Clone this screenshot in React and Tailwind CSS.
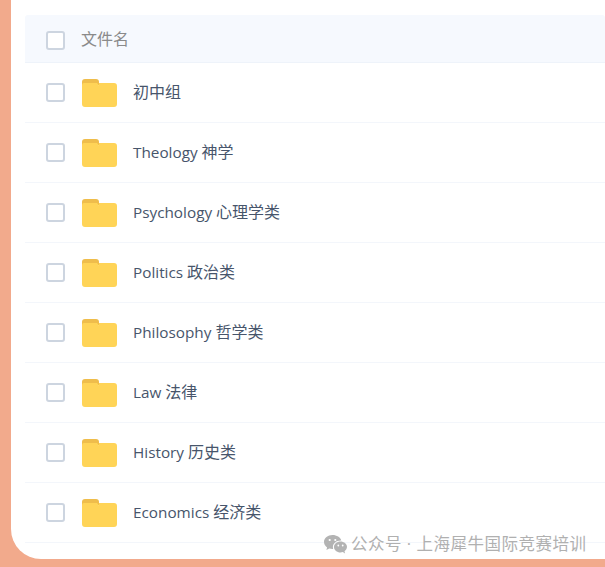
const rows = [["", "初中组"], ["Theology ", "神学"], ["Psychology ", "心理学类"], ["Politics ", "政治类"], ["Philosophy ", "哲学类"], ["Law ", "法律"], ["History ", "历史类"], ["Economics ", "经济类"]];

function Check({ className = "" }) {
  return <span className={"block w-[19px] h-[19px] shrink-0 rounded-[3px] border-2 border-[#cdd5e0] bg-white " + className} />;
}

function Folder() {
  return (
    <svg width="35" height="28" viewBox="0 0 35 28" className="block shrink-0">
      <path d="M0 3a3 3 0 0 1 3-3h11a3 3 0 0 1 3 3v3H0z" fill="#efbd4b" />
      <path d="M0 6a2 2 0 0 1 2-2h13l2 2.500V4h15a3 3 0 0 1 3 3v18a3 3 0 0 1-3 3H3a3 3 0 0 1-3-3z" fill="#ffd457" />
    </svg>
  );
}

function WeChat() {
  return (
    <svg width="23" height="19" viewBox="0 0 23 19" className="shrink-0">
      <path d="M8.500 0C3.800 0 0 3.100 0 7c0 2.200 1.200 4.100 3.100 5.400L2.400 15l2.900-1.500c1 .3 2 .5 3.200.5h.7a6 6 0 0 1-.3-1.900C8.900 8.400 12.300 5.500 16.700 5.500h.6C16.400 2.300 12.800 0 8.500 0z" fill="#b3b3b3" />
      <path d="M23 12c0-3.100-3-5.500-6.500-5.500S10 8.900 10 12s3 5.500 6.500 5.500c.8 0 1.600-.1 2.300-.4l2.300 1.400-.6-2.200c1.500-1.100 2.500-2.900 2.500-4.800z" fill="#b3b3b3" />
      <circle cx="5.700" cy="5" r="1.100" fill="#fff" />
      <circle cx="11.300" cy="5" r="1.100" fill="#fff" />
      <circle cx="14.300" cy="10.500" r=".9" fill="#fff" />
      <circle cx="18.700" cy="10.500" r=".9" fill="#fff" />
    </svg>
  );
}

export default function App() {
  return (
    <div className="relative w-[605px] h-[567px] overflow-hidden bg-[#f2aa8c] font-['Open_Sans','Noto_Sans_CJK_SC',sans-serif]">
      <div className="ml-[11px] h-[559px] bg-white rounded-bl-[30px] pl-[14px] pt-[15px]">
        <div className="flex items-center h-[48px] pl-[21px] bg-[#f6f9fe] border-b border-[#eef3fa] rounded-t-[3px]">
          <Check className="mt-[3px]" />
          <span className="ml-[16px] text-[16px] text-[#8a8a8a]">文件名</span>
        </div>
        {rows.map(([en, zh]) => (
          <div key={zh} className="flex items-center h-[60px] pl-[21px] border-b border-[#f3f6fb]">
            <Check />
            <span className="ml-[17px] mt-[1px]"><Folder /></span>
            <span className="ml-[16px] pb-[2px] text-[#47556b] whitespace-pre">
              <span className="text-[15.3px]">{en}</span>
              <span className="text-[16px]">{zh}</span>
            </span>
          </div>
        ))}
      </div>
      <div className="absolute left-[324px] top-[532px] flex items-center gap-[4px] text-[16.5px] tracking-[0.5px] text-[#b0b0b0]">
        <WeChat />
        <span>公众号 · 上海犀牛国际竞赛培训</span>
      </div>
    </div>
  );
}
